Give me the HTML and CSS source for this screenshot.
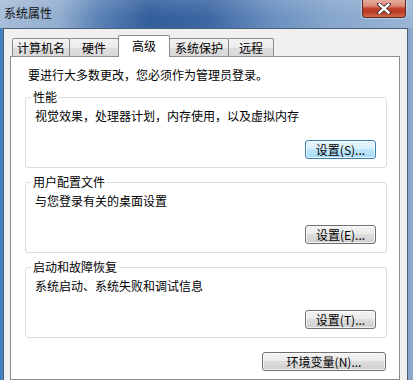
FILE: index.html
```html
<!DOCTYPE html>
<html lang="zh-CN">
<head>
<meta charset="utf-8">
<title>系统属性</title>
<link rel="stylesheet" href="styles.css">
</head>
<body>
<div class="window">
  <div class="titlebar">
    <span class="title">系统属性</span>
    <div class="close">
      <svg width="14" height="11" viewBox="0 0 14 11">
        <path d="M2 1 L12 10 M12 1 L2 10" stroke="#3b2a2a" stroke-width="4" stroke-linecap="square"/>
        <path d="M2.5 1.5 L11.5 9.5 M11.5 1.5 L2.5 9.5" stroke="#ffffff" stroke-width="2.4" stroke-linecap="square"/>
      </svg>
    </div>
  </div>
  <div class="client">
    <div class="tabs">
      <div class="tab tab-w1">计算机名</div>
      <div class="tab tab-w2">硬件</div>
      <div class="tab tab-active">高级</div>
      <div class="tab tab-w4">系统保护</div>
      <div class="tab tab-w5">远程</div>
    </div>
    <div class="panel">
      <div class="intro">要进行大多数更改，您必须作为管理员登录。</div>
      <fieldset class="group">
        <legend>性能</legend>
        <div class="desc">视觉效果，处理器计划，内存使用，以及虚拟内存</div>
        <div class="btn-row"><button class="btn btn-default">设置(S)...</button></div>
      </fieldset>
      <fieldset class="group">
        <legend>用户配置文件</legend>
        <div class="desc">与您登录有关的桌面设置</div>
        <div class="btn-row"><button class="btn">设置(E)...</button></div>
      </fieldset>
      <fieldset class="group">
        <legend>启动和故障恢复</legend>
        <div class="desc">系统启动、系统失败和调试信息</div>
        <div class="btn-row"><button class="btn">设置(T)...</button></div>
      </fieldset>
      <div class="env-row"><button class="btn btn-env">环境变量(N)...</button></div>
    </div>
  </div>
</div>
</body>
</html>
```
FILE: styles.css
```css
* { box-sizing: border-box; }
html, body {
  margin: 0;
  padding: 0;
  width: 413px;
  height: 380px;
  overflow: hidden;
  font-family: "Noto Sans CJK SC", "Liberation Sans", sans-serif;
  font-size: 12px;
  color: #000;
}
.window {
  width: 413px;
  height: 380px;
  display: flex;
  flex-direction: column;
  background: linear-gradient(90deg, #3a7bc0 0, #6d98c8 1.5%, #7b9cc6 97%, #8ea9cb 100%);
}
.titlebar {
  height: 28px;
  flex: none;
  display: flex;
  align-items: flex-start;
  background:
    linear-gradient(180deg, rgba(255,255,255,0.12) 0, rgba(255,255,255,0) 60%),
    linear-gradient(90deg, #a7bdd8 0, #93aecf 14%, #5a82b6 24%, #335f9c 36%, #3c67a3 50%, #6b90c0 66%, #86a6cc 80%, #9bb6d6 100%);
}
.title {
  margin: 5px 0 0 4px;
  line-height: 16px;
  font-size: 12px;
  color: #111;
}
.close {
  margin-left: auto;
  margin-right: 7px;
  width: 44px;
  height: 18px;
  border: 1px solid #5a2a22;
  border-top: none;
  border-radius: 0 0 4px 4px;
  background: linear-gradient(180deg, #e6ab9c 0, #d98a76 35%, #c4432c 50%, #b93a25 70%, #d4684f 100%);
  box-shadow: 0 0 0 1px rgba(255,255,255,0.35);
  display: flex;
  align-items: center;
  justify-content: center;
}
.client {
  flex: 1;
  margin: 0 5px 0 3px;
  border: 1px solid #4a5c75;
  border-bottom: none;
  background: #f0f0f0;
  padding: 6px 7px 0 6px;
  display: flex;
  flex-direction: column;
}
.tabs {
  display: flex;
  align-items: flex-end;
  height: 21px;
  margin-left: 2px;
  position: relative;
  z-index: 1;
}
.tab {
  height: 18px;
  border: 1px solid #898c95;
  border-bottom: none;
  border-radius: 2px 2px 0 0;
  background: linear-gradient(180deg, #f4f4f4 0, #ebebeb 50%, #dedede 51%, #d8d8d8 100%);
  text-align: center;
  line-height: 16px;
  padding-top: 1px;
  white-space: nowrap;
}
.tab + .tab { margin-left: -1px; }
.tab-w1 { width: 58px; }
.tab-w2 { width: 50px; }
.tab-w4 { width: 60px; }
.tab-w5 { width: 46px; }
.tab-active {
  width: 52px;
  height: 22px;
  margin-bottom: -1px;
  background: #fff;
  padding-top: 2px;
  position: relative;
  z-index: 2;
}
.panel {
  flex: 1;
  background: #fff;
  border: 1px solid #898c95;
  padding: 0 12px 0 14px;
}
.intro {
  margin-top: 10px;
  padding-left: 3px;
  line-height: 16px;
}
.group {
  margin: 6px 0 0;
  border: 1px solid #d5dfe5;
  border-radius: 3px;
  padding: 3px 10px 8px 9px;
  min-width: 0;
}
.group legend {
  padding: 0 2px;
  margin-left: -4px;
  line-height: 16px;
}
.desc {
  line-height: 16px;
}
.btn-row {
  display: flex;
  justify-content: flex-end;
  margin-top: 16px;
}
.btn {
  font-family: "Noto Sans CJK SC", "Liberation Sans", sans-serif;
  font-size: 12px;
  color: #000;
  width: 71px;
  height: 19px;
  padding: 0;
  line-height: 16px;
  border: 1px solid #707070;
  border-radius: 3px;
  background: linear-gradient(180deg, #f2f2f2 0, #ebebeb 45%, #dddddd 50%, #cfcfcf 100%);
  box-shadow: inset 0 0 0 1px rgba(255,255,255,0.7);
}
.btn-default {
  border-color: #3c7fb1;
  background: linear-gradient(180deg, #eaf6fd 0, #d9f0fc 45%, #bee6fd 50%, #a7d9f5 100%);
}
.env-row {
  display: flex;
  justify-content: flex-end;
  margin-top: 14px;
  padding-right: 1px;
}
.btn-env { width: 124px; }
```
